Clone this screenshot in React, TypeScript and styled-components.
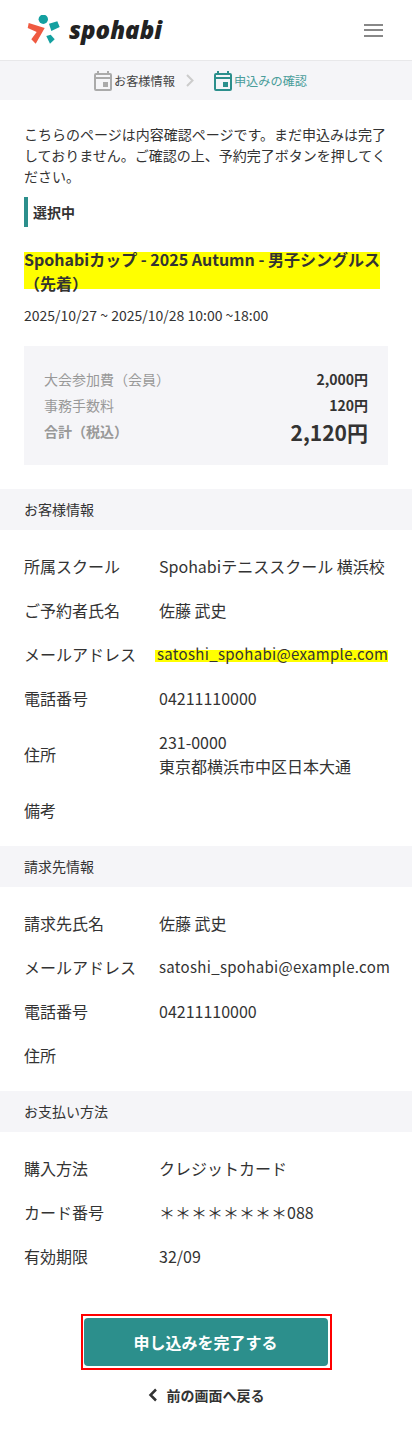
import React from "react";
import styled, { createGlobalStyle } from "styled-components";

const GlobalStyle = createGlobalStyle`
  html, body {
    margin: 0;
    padding: 0;
    background: #fff;
  }
  body {
    font-family: "Noto Sans CJK JP", "Noto Sans", sans-serif;
    color: #333;
    font-size: 14px;
  }
`;

const TEAL = "#2c8f8c";
const PALE = "#f5f5f8";

const Page = styled.div`
  width: 412px;
  height: 1440px;
  overflow: hidden;
`;

const Header = styled.header`
  height: 60px;
  display: flex;
  align-items: center;
  justify-content: space-between;
  padding: 0 29px 0 27px;
  border-bottom: 1px solid #e8e8ea;
`;

const Logo = styled.div`
  display: flex;
  align-items: center;
  gap: 9px;
`;

const Wordmark = styled.span`
  font-family: "Open Sans", sans-serif;
  font-style: italic;
  font-weight: 800;
  font-size: 24px;
  line-height: 30px;
  color: #222;
`;

const Burger = styled.div`
  width: 19px;
  display: flex;
  flex-direction: column;
  gap: 3.5px;
  span {
    display: block;
    height: 2px;
    background: #888;
  }
`;

const Steps = styled.nav`
  height: 39px;
  background: ${PALE};
  display: flex;
  align-items: center;
  justify-content: flex-start;
  padding-left: 94px;
`;

const Step = styled.div<{ $active?: boolean }>`
  display: flex;
  align-items: center;
  gap: 2px;
  font-size: 12.2px;
  line-height: 18px;
  color: ${(p) => (p.$active ? "#4a9d9b" : "#444")};
`;

const StepArrow = styled.svg`
  margin: 0 20px 0 11px;
  display: block;
`;

const Intro = styled.section`
  padding: 24px 24px 0;
`;

const Lead = styled.p`
  margin: 0;
  font-size: 14px;
  line-height: 21px;
`;

const Selected = styled.h2`
  margin: 10px 0 0;
  border-left: 4px solid ${TEAL};
  padding-left: 5px;
  height: 30px;
  line-height: 30px;
  font-size: 14px;
  font-weight: 700;
`;

const Title = styled.h1`
  margin: 20px 0 0;
  max-width: 356px;
  font-size: 16px;
  line-height: 24px;
  font-weight: 700;
  color: #333;
  background: linear-gradient(#ff0, #ff0) no-repeat 0 5px / 100% 37px;
`;

const Dates = styled.p`
  margin: 8px 0 0;
  font-size: 14px;
  line-height: 24px;
`;

const Summary = styled.div`
  margin-top: 19px;
  background: ${PALE};
  padding: 20px 20px 21px;
  display: flex;
  flex-direction: column;
`;

const SummaryRow = styled.div`
  display: flex;
  justify-content: space-between;
  align-items: center;
  height: 26px;
`;

const SummaryLabel = styled.span<{ $strong?: boolean }>`
  font-size: 14px;
  color: #999;
  font-weight: ${(p) => (p.$strong ? 700 : 400)};
`;

const SummaryValue = styled.span<{ $large?: boolean }>`
  font-size: ${(p) => (p.$large ? "21px" : "14px")};
  margin-top: ${(p) => (p.$large ? "2px" : "0")};
  font-weight: 700;
  color: #333;
`;

const SectionHead = styled.h3<{ $first?: boolean }>`
  margin: ${(p) => (p.$first ? "24px 0 0" : "0")};
  height: 41px;
  line-height: 41px;
  padding-left: 24px;
  background: ${PALE};
  font-size: 14px;
  font-weight: 400;
`;

const Rows = styled.dl`
  margin: 0;
  padding: 14px 0 14px 24px;
`;

const Row = styled.div`
  display: flex;
  align-items: center;
  padding: 10px 0;
  font-size: 16px;
  line-height: 24px;
`;

const Label = styled.dt`
  width: 135px;
  flex: none;
`;

const Value = styled.dd`
  margin: 0;
  white-space: nowrap;
`;

const Mail = styled.div`
  font-size: 15px;
  letter-spacing: 0.31px;
`;

const Marked = styled(Mail)`
  margin-left: -4px;
  padding-left: 2px;
  width: 233px;
  box-sizing: border-box;
  background: linear-gradient(#ff0, #ff0) no-repeat 0 8px / 100% 12px;
`;

const Actions = styled.div`
  margin-top: 22px;
  display: flex;
  flex-direction: column;
  align-items: center;
`;

const ButtonFrame = styled.div`
  border: 2px solid #f00;
  padding: 2px 2px 2px 1px;
  display: flex;
`;

const SubmitButton = styled.button`
  width: 244px;
  height: 48px;
  border: 0;
  border-radius: 4px;
  background: ${TEAL};
  color: #fff;
  font-family: inherit;
  font-size: 16px;
  font-weight: 700;
`;

const BackLink = styled.a`
  margin-top: 13px;
  display: flex;
  align-items: center;
  gap: 9px;
  font-size: 14px;
  font-weight: 700;
  line-height: 24px;
  color: #333;
`;

const CalendarIcon = ({ color }: { color: string }) => (
  <svg width="18" height="20" viewBox="0 0 18 20" fill="none">
    <path d="M4 0v4M14 0v4" stroke={color} strokeWidth="2" />
    <rect x="1" y="3" width="16" height="16" rx="1" stroke={color} strokeWidth="2" />
    <path d="M1 7h16" stroke={color} strokeWidth="2" />
    <rect x="9" y="11" width="5" height="5" fill={color} />
  </svg>
);

const LogoMark = () => (
  <svg width="33" height="30" viewBox="0 0 33 30">
    <circle cx="16.3" cy="4.3" r="4.7" fill="#14a0a0" />
    <path d="M1.700 8L17.700 13 8.700 28.700 4.300 24.300 9.700 17 .7 13z" fill="#ef5a41" />
    <path d="M22 8.700L30.300 6.300 32.700 12 24.300 16z" fill="#14a0a0" />
    <path d="M19.300 21L23.700 19.700 27.700 24.300 23 28.700z" fill="#14a0a0" />
  </svg>
);

type Item = { label: string; value?: React.ReactNode };

const customer: Item[] = [
  { label: "所属スクール", value: "Spohabiテニススクール 横浜校" },
  { label: "ご予約者氏名", value: "佐藤 武史" },
  { label: "メールアドレス", value: <Marked>satoshi_spohabi@example.com</Marked> },
  { label: "電話番号", value: "04211110000" },
  {
    label: "住所",
    value: (
      <>
        231-0000
        <br />
        東京都横浜市中区日本大通
      </>
    ),
  },
  { label: "備考" },
];

const billing: Item[] = [
  { label: "請求先氏名", value: "佐藤 武史" },
  { label: "メールアドレス", value: <Mail>satoshi_spohabi@example.com</Mail> },
  { label: "電話番号", value: "04211110000" },
  { label: "住所" },
];

const payment: Item[] = [
  { label: "購入方法", value: "クレジットカード" },
  { label: "カード番号", value: "＊＊＊＊＊＊＊＊088" },
  { label: "有効期限", value: "32/09" },
];

const InfoRows = ({ items }: { items: Item[] }) => (
  <Rows>
    {items.map((item) => (
      <Row key={item.label}>
        <Label>{item.label}</Label>
        <Value>{item.value}</Value>
      </Row>
    ))}
  </Rows>
);

export default function App() {
  return (
    <Page>
      <GlobalStyle />
      <Header>
        <Logo>
          <LogoMark />
          <Wordmark>spohabi</Wordmark>
        </Logo>
        <Burger>
          <span />
          <span />
          <span />
        </Burger>
      </Header>
      <Steps>
        <Step>
          <CalendarIcon color="#aaa" />
          お客様情報
        </Step>
        <StepArrow width="8" height="13" viewBox="0 0 8 13" fill="none">
          <path d="M1 1l5.500 5.500L1 12" stroke="#ccc" strokeWidth="2" />
        </StepArrow>
        <Step $active>
          <CalendarIcon color={TEAL} />
          申込みの確認
        </Step>
      </Steps>
      <Intro>
        <Lead>
          こちらのページは内容確認ページです。まだ申込みは完了しておりません。ご確認の上、予約完了ボタンを押してください。
        </Lead>
        <Selected>選択中</Selected>
        <Title>Spohabiカップ - 2025 Autumn - 男子シングルス（先着）</Title>
        <Dates>2025/10/27 ~ 2025/10/28 10:00 ~18:00</Dates>
        <Summary>
          <SummaryRow>
            <SummaryLabel>大会参加費（会員）</SummaryLabel>
            <SummaryValue>2,000円</SummaryValue>
          </SummaryRow>
          <SummaryRow>
            <SummaryLabel>事務手数料</SummaryLabel>
            <SummaryValue>120円</SummaryValue>
          </SummaryRow>
          <SummaryRow>
            <SummaryLabel $strong>合計（税込）</SummaryLabel>
            <SummaryValue $large>2,120円</SummaryValue>
          </SummaryRow>
        </Summary>
      </Intro>
      <SectionHead $first>お客様情報</SectionHead>
      <InfoRows items={customer} />
      <SectionHead>請求先情報</SectionHead>
      <InfoRows items={billing} />
      <SectionHead>お支払い方法</SectionHead>
      <InfoRows items={payment} />
      <Actions>
        <ButtonFrame>
          <SubmitButton>申し込みを完了する</SubmitButton>
        </ButtonFrame>
        <BackLink>
          <svg width="10" height="14" viewBox="0 0 10 14" fill="none">
            <path d="M8 1.500L2.500 7 8 12.500" stroke="#333" strokeWidth="2.500" />
          </svg>
          前の画面へ戻る
        </BackLink>
      </Actions>
    </Page>
  );
}
